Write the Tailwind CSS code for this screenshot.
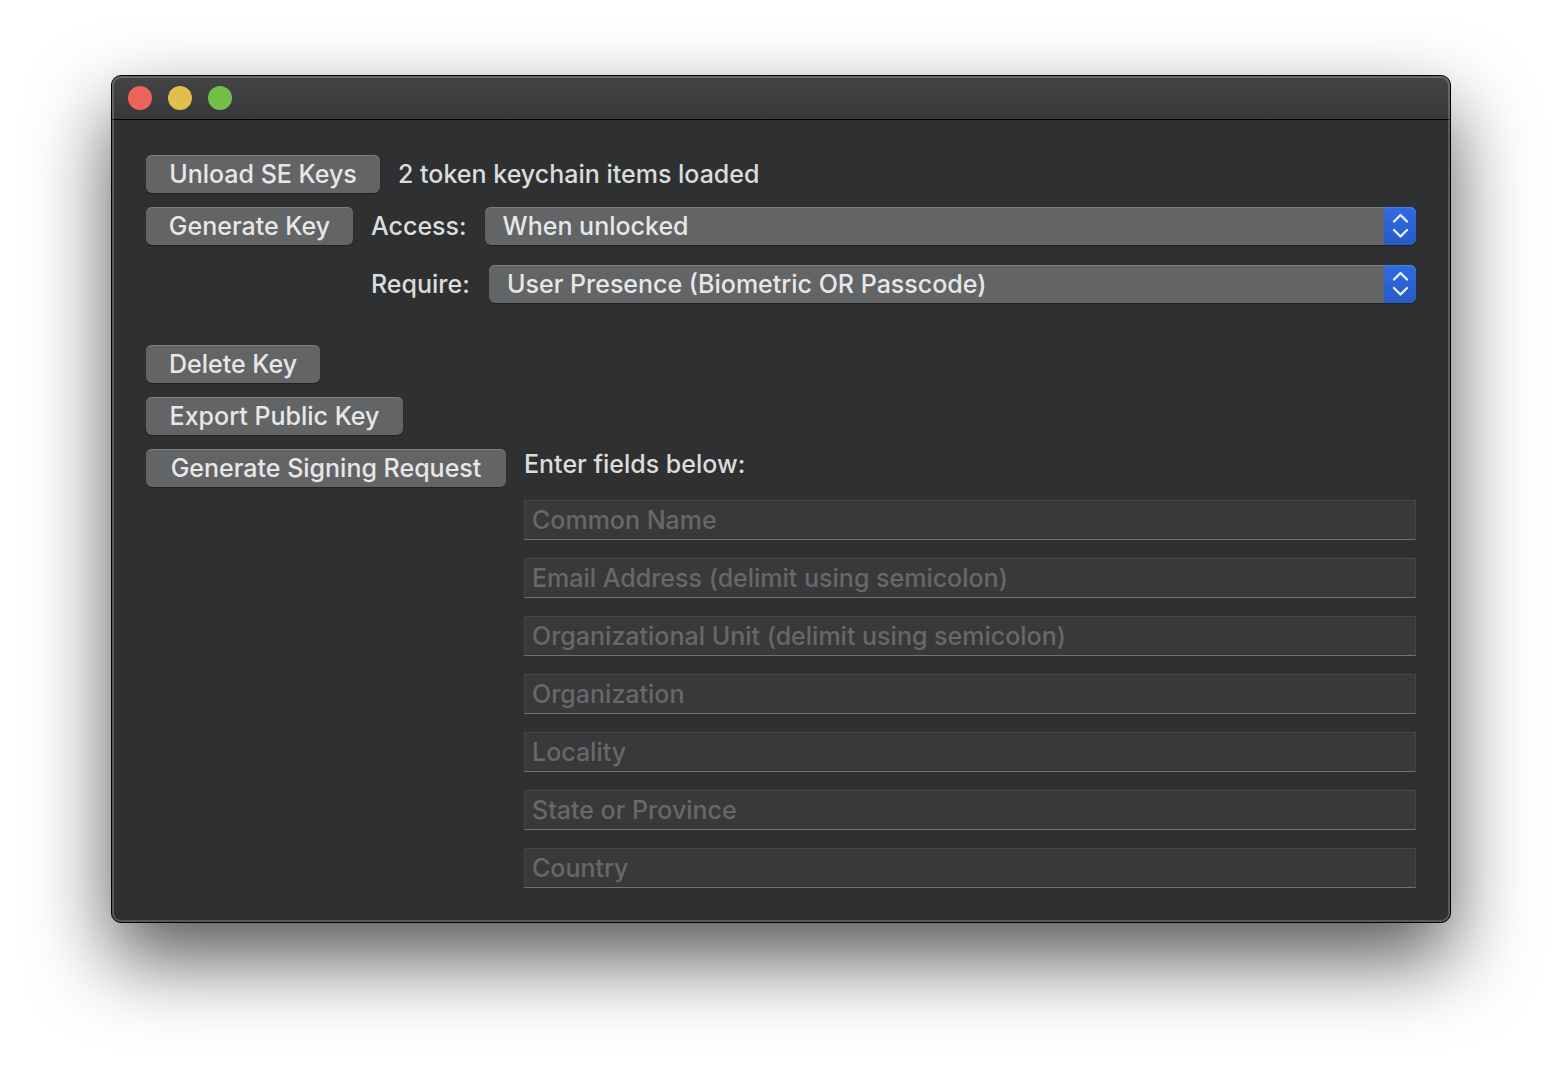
<!DOCTYPE html>
<html lang="en">
<head>
<meta charset="utf-8">
<title>Secure Enclave Keys</title>
<script src="https://cdn.jsdelivr.net/npm/@tailwindcss/browser@4"></script>
</head>
<body class="min-h-screen overflow-x-hidden bg-white px-[111px] pt-[75px] pb-[147px] font-[Inter,sans-serif] text-[25px] leading-[38px] font-medium text-[#dcdcdd]">
<main class="relative rounded-[10px] border border-black bg-[#2f3031] shadow-[0_36px_80px_rgba(0,0,0,0.66)]">
  <header class="flex h-11 items-center gap-4 rounded-t-[9px] border-b border-black bg-linear-to-b from-[#434446] to-[#373839] px-4">
    <button type="button" aria-label="Close" class="size-6 rounded-full bg-[#ed655a]"></button>
    <button type="button" aria-label="Minimize" class="size-6 rounded-full bg-[#e0c04c]"></button>
    <button type="button" aria-label="Zoom" class="size-6 rounded-full bg-[#72be47]"></button>
  </header>

  <div class="px-[34px] pt-[35px] pb-[34px]">
    <div class="flex items-center gap-[18px]">
      <button type="button" class="h-[38px] min-w-[234px] shrink-0 rounded-md bg-[#636466] leading-[38px] text-[#e7e7e8] shadow-[0_1px_1px_rgba(0,0,0,0.35),inset_0_1px_0_#7d7e80]">Unload SE Keys</button>
      <p>2 token keychain items loaded</p>
    </div>

    <div class="mt-[14px] flex items-start gap-[18px]">
      <button type="button" class="h-[38px] min-w-[207px] shrink-0 rounded-md bg-[#636466] leading-[38px] text-[#e7e7e8] shadow-[0_1px_1px_rgba(0,0,0,0.35),inset_0_1px_0_#7d7e80]">Generate Key</button>
      <div class="flex min-w-0 grow flex-col gap-5">
        <div class="flex gap-[18px]">
          <label for="access" class="min-w-[95px]">Access:</label>
          <div class="relative flex min-w-0 grow">
            <select id="access" class="h-[38px] w-full appearance-none rounded-md bg-[#636466] pr-10 pl-[18px] leading-[38px] text-[#e7e7e8] shadow-[0_1px_1px_rgba(0,0,0,0.35),inset_0_1px_0_#7d7e80]">
              <option>When unlocked</option>
            </select>
            <span class="pointer-events-none absolute inset-y-0 right-0 w-8 rounded-r-md bg-linear-to-b from-[#306be0] to-[#265bc8] shadow-[inset_0_1px_0_#4b80e6]">
              <svg class="size-full" viewBox="0 0 32 38" fill="none" stroke="#e9effb" stroke-width="2.4" stroke-linecap="round" stroke-linejoin="round"><path d="M10 14.5l6.5-6.5 6.5 6.5M10 23l6.5 6.5L23 23"/></svg>
            </span>
          </div>
        </div>
        <div class="flex gap-[18px]">
          <label for="require" class="min-w-[100px]">Require:</label>
          <div class="relative flex min-w-0 grow">
            <select id="require" class="h-[38px] w-full appearance-none rounded-md bg-[#636466] pr-10 pl-[18px] leading-[38px] text-[#e7e7e8] shadow-[0_1px_1px_rgba(0,0,0,0.35),inset_0_1px_0_#7d7e80]">
              <option>User Presence (Biometric OR Passcode)</option>
            </select>
            <span class="pointer-events-none absolute inset-y-0 right-0 w-8 rounded-r-md bg-linear-to-b from-[#306be0] to-[#265bc8] shadow-[inset_0_1px_0_#4b80e6]">
              <svg class="size-full" viewBox="0 0 32 38" fill="none" stroke="#e9effb" stroke-width="2.4" stroke-linecap="round" stroke-linejoin="round"><path d="M10 14.5l6.5-6.5 6.5 6.5M10 23l6.5 6.5L23 23"/></svg>
            </span>
          </div>
        </div>
      </div>
    </div>

    <div class="mt-[42px] flex flex-col items-start gap-[14px]">
      <button type="button" class="h-[38px] min-w-[174px] rounded-md bg-[#636466] leading-[38px] text-[#e7e7e8] shadow-[0_1px_1px_rgba(0,0,0,0.35),inset_0_1px_0_#7d7e80]">Delete Key</button>
      <button type="button" class="h-[38px] min-w-[257px] rounded-md bg-[#636466] leading-[38px] text-[#e7e7e8] shadow-[0_1px_1px_rgba(0,0,0,0.35),inset_0_1px_0_#7d7e80]">Export Public Key</button>
    </div>

    <form class="mt-[10px] flex items-start gap-[18px]">
      <button type="button" class="mt-1 h-[38px] min-w-[360px] shrink-0 rounded-md bg-[#636466] leading-[38px] text-[#e7e7e8] shadow-[0_1px_1px_rgba(0,0,0,0.35),inset_0_1px_0_#7d7e80]">Generate Signing Request</button>
      <fieldset class="flex min-w-0 grow flex-col gap-[18px]">
        <legend class="mb-[17px]">Enter fields below:</legend>
        <input type="text" aria-label="Common Name" placeholder="Common Name" class="h-10 w-full border border-[#454647] border-b-[#727374] bg-[#38393a] px-[7px] placeholder:text-[#676869]">
        <input type="text" aria-label="Email Address" placeholder="Email Address (delimit using semicolon)" class="h-10 w-full border border-[#454647] border-b-[#727374] bg-[#38393a] px-[7px] placeholder:text-[#676869]">
        <input type="text" aria-label="Organizational Unit" placeholder="Organizational Unit (delimit using semicolon)" class="h-10 w-full border border-[#454647] border-b-[#727374] bg-[#38393a] px-[7px] placeholder:text-[#676869]">
        <input type="text" aria-label="Organization" placeholder="Organization" class="h-10 w-full border border-[#454647] border-b-[#727374] bg-[#38393a] px-[7px] placeholder:text-[#676869]">
        <input type="text" aria-label="Locality" placeholder="Locality" class="h-10 w-full border border-[#454647] border-b-[#727374] bg-[#38393a] px-[7px] placeholder:text-[#676869]">
        <input type="text" aria-label="State or Province" placeholder="State or Province" class="h-10 w-full border border-[#454647] border-b-[#727374] bg-[#38393a] px-[7px] placeholder:text-[#676869]">
        <input type="text" aria-label="Country" placeholder="Country" class="h-10 w-full border border-[#454647] border-b-[#727374] bg-[#38393a] px-[7px] placeholder:text-[#676869]">
      </fieldset>
    </form>
  </div>
  <div class="pointer-events-none absolute inset-0 rounded-[9px] border-2 border-white/20"></div>
</main>
</body>
</html>
